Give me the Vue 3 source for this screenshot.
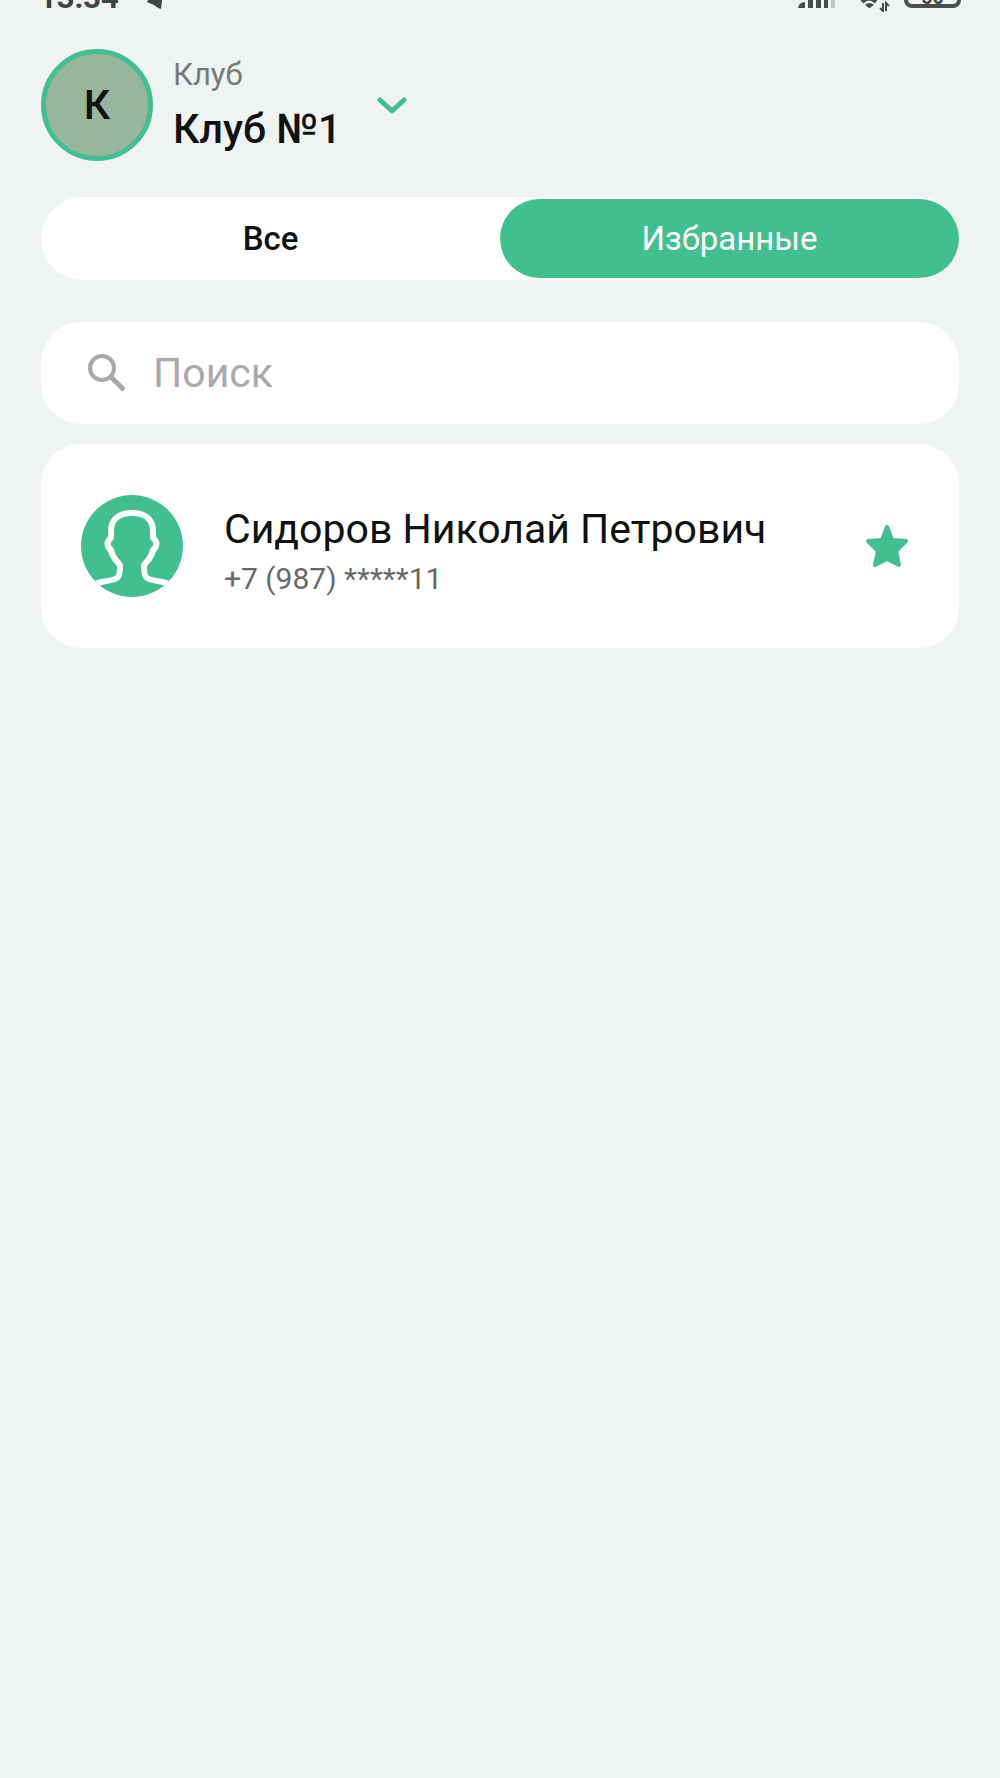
<script setup>
import { ref, computed } from 'vue'

const tabs = [
  { id: 'all', label: 'Все' },
  { id: 'favorites', label: 'Избранные' },
]
const activeTab = ref('favorites')
const query = ref('')
const clients = ref([
  { id: 1, name: 'Сидоров Николай Петрович', phone: '+7 (987) *****11', favorite: true },
])

const visibleClients = computed(() =>
  clients.value.filter(
    (c) =>
      (activeTab.value === 'all' || c.favorite) &&
      c.name.toLowerCase().includes(query.value.toLowerCase()),
  ),
)
</script>

<template>
  <div class="screen">
    <div class="status-bar">
      <span class="clock">13:34</span>
      <svg class="status-icon" width="16" height="16" viewBox="0 0 16 16" aria-hidden="true">
        <path d="M0 10 5 0h11l-2 17-3-1-4-3z" fill="#3f4543" />
      </svg>
      <span class="spacer"></span>
      <svg class="status-icon signal" width="38" height="16" viewBox="0 0 38 16" aria-hidden="true">
        <g fill="#4a4f4d">
          <path d="M0 16q1-6 7-6v6z" />
          <path d="M10 6h5v10h-5zM18 2h5v14h-5zM26 0h4v16h-4z" />
        </g>
        <path d="M33 0h4v16h-4z" fill="#c3c6c5" />
      </svg>
      <svg class="status-icon wifi" width="30" height="16" viewBox="0 0 30 16" aria-hidden="true">
        <path d="M2 10Q9 3 16 10" fill="none" stroke="#4a4f4d" stroke-width="4" />
        <path d="M5 13q4-4 9 0l-4 3H9z" fill="#4a4f4d" />
        <path d="M23 11v8l-3-3M26 19v-8l3 3" fill="none" stroke="#4a4f4d" stroke-width="2" />
      </svg>
      <span class="battery">60</span>
    </div>

    <header class="header">
      <button class="club" type="button" aria-haspopup="listbox">
        <span class="club-avatar">К</span>
        <span class="club-text">
          <span class="club-caption">Клуб</span>
          <span class="club-name">Клуб №1</span>
        </span>
        <svg width="32" height="20" viewBox="0 0 32 20" aria-hidden="true">
          <path d="M4 5 16 16 28 5" fill="none" stroke="#41bf90" stroke-width="5" stroke-linecap="round" stroke-linejoin="round" />
        </svg>
      </button>
    </header>

    <main class="content">
      <div class="tabs" role="tablist">
        <button
          v-for="tab in tabs"
          :key="tab.id"
          type="button"
          role="tab"
          class="tab"
          :class="{ active: tab.id === activeTab }"
          :aria-selected="tab.id === activeTab"
          @click="activeTab = tab.id"
        >
          {{ tab.label }}
        </button>
      </div>

      <label class="search">
        <svg width="38" height="38" viewBox="0 0 38 38" aria-hidden="true">
          <circle cx="15" cy="14" r="12" fill="none" stroke="#a9a9a9" stroke-width="4" />
          <path d="M23 22 37 36" stroke="#a9a9a9" stroke-width="5" />
        </svg>
        <input v-model="query" type="text" placeholder="Поиск" aria-label="Поиск" />
      </label>

      <ul class="clients">
        <li v-for="client in visibleClients" :key="client.id" class="client">
          <svg class="client-avatar" width="102" height="102" viewBox="0 0 102 102" aria-hidden="true">
            <clipPath id="avatar-circle"><circle cx="51" cy="51" r="51" /></clipPath>
            <g clip-path="url(#avatar-circle)">
              <rect width="102" height="102" fill="#41bf90" />
              <path
                d="M8 92C19 84 31 88 37 82Q39 80 39 70C35 65 31 62 30 55C26 52 25 46 30 43V36C30 24 38 18 51 18S72 24 72 36V43C77 46 76 52 72 55C71 62 67 65 63 70Q63 80 65 82C71 88 83 84 94 92"
                fill="none"
                stroke="#fff"
                stroke-width="6"
                stroke-linejoin="round"
              />
            </g>
          </svg>
          <div class="client-text">
            <span class="client-name">{{ client.name }}</span>
            <span class="client-phone">{{ client.phone }}</span>
          </div>
          <button
            class="star"
            type="button"
            aria-label="Избранное"
            :aria-pressed="client.favorite"
            @click="client.favorite = !client.favorite"
          >
            <svg width="44" height="44" viewBox="0 0 44 44" aria-hidden="true">
              <path
                d="M22 3 27 16 41 17 31 27 34 41 22 35 10 41 13 27 3 17 17 16Z"
                fill="#41bf90"
                stroke="#41bf90"
                stroke-width="4"
                stroke-linejoin="round"
              />
            </svg>
          </button>
        </li>
      </ul>
    </main>
  </div>
</template>

<style>
body {
  margin: 0;
  background: #eff4f3;
}
</style>

<style scoped>
.screen {
  min-height: 100vh;
  box-sizing: border-box;
  padding: 0 41px;
  background: #eff4f3;
  color: #101211;
  font-family: Roboto, 'Noto Sans', sans-serif;
}

button {
  margin: 0;
  padding: 0;
  border: 0;
  background: none;
  color: inherit;
  font: inherit;
  cursor: pointer;
}

.status-bar {
  display: flex;
  align-items: flex-end;
  box-sizing: border-box;
  height: 12px;
  margin: 0 -2px;
  padding-bottom: 4px;
  overflow: hidden;
  color: #3f4543;
}

.clock {
  font-size: 31px;
  line-height: 32px;
  font-weight: 700;
  margin-bottom: -6px;
}

.status-icon {
  flex: none;
  margin-left: 28px;
  overflow: visible;
}

.spacer {
  flex: 1;
}

.signal {
  margin-left: 0;
}

.wifi {
  margin-left: 24px;
}

.battery {
  box-sizing: border-box;
  width: 57px;
  height: 30px;
  margin-left: 14px;
  border: 4px solid #4a4f4d;
  border-radius: 8px;
  font-size: 20px;
  line-height: 30px;
  font-weight: 700;
  text-align: center;
}

.header {
  padding-top: 37px;
}

.club {
  display: flex;
  align-items: center;
  text-align: left;
}

.club-avatar {
  display: flex;
  align-items: center;
  justify-content: center;
  box-sizing: border-box;
  width: 112px;
  height: 112px;
  border: 5px solid #41bf90;
  border-radius: 50%;
  background: #9ab59e;
  font-size: 41px;
  font-weight: 500;
}

.club-text {
  display: flex;
  flex-direction: column;
  gap: 6px;
  margin: 0 35px 0 20px;
  padding-bottom: 6px;
}

.club-caption {
  color: #767a79;
  font-size: 31px;
  line-height: 48px;
}

.club-name {
  font-size: 41px;
  line-height: 48px;
  font-weight: 500;
}

.content {
  display: flex;
  flex-direction: column;
  padding-top: 36px;
}

.tabs {
  display: flex;
  padding: 2px 0;
  border-radius: 42px;
  background: #fff;
}

.tab {
  flex: 1;
  height: 79px;
  border-radius: 40px;
  font-size: 33px;
  font-weight: 500;
}

.tab.active {
  background: #41bf90;
  color: #fff;
  font-weight: 400;
}

.search {
  display: flex;
  align-items: center;
  gap: 28px;
  height: 102px;
  margin-top: 42px;
  padding: 0 46px;
  border-radius: 40px;
  background: #fff;
}

.search input {
  flex: 1;
  min-width: 0;
  padding: 0;
  border: 0;
  outline: 0;
  background: none;
  color: inherit;
  font-family: inherit;
  font-size: 41px;
  line-height: 48px;
}

.search input::placeholder {
  color: #a9a9a9;
  opacity: 1;
}

.clients {
  display: flex;
  flex-direction: column;
  gap: 20px;
  margin: 20px 0 0;
  padding: 0;
  list-style: none;
}

.client {
  display: flex;
  align-items: center;
  padding: 51px 50px 51px 40px;
  border-radius: 40px;
  background: #fff;
}

.client-avatar {
  flex: none;
}

.client-text {
  display: flex;
  flex: 1;
  flex-direction: column;
  gap: 10px;
  min-width: 0;
  margin-left: 41px;
  padding-top: 8px;
}

.client-name {
  font-size: 41px;
  line-height: 48px;
}

.client-phone {
  color: #666968;
  font-size: 30px;
  line-height: 32px;
}

.star {
  display: flex;
}
</style>
